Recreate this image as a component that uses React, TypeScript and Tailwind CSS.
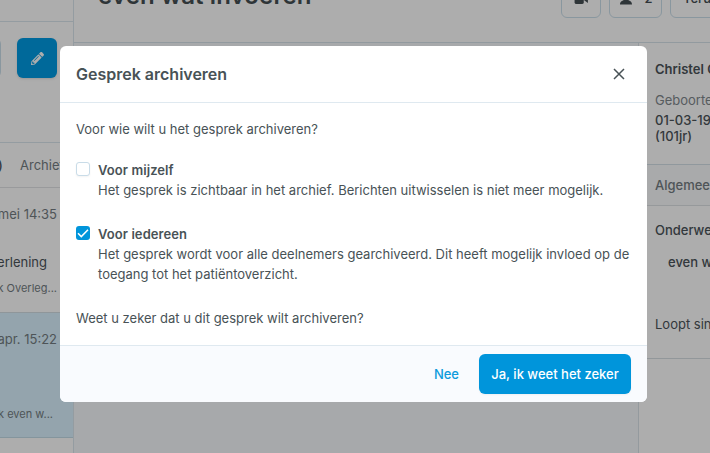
import { FaPencilAlt } from 'react-icons/fa';

type OptionProps = {
  title: string;
  description: string;
  checked?: boolean;
};

const Option = ({ title, description, checked = false }: OptionProps) => (
  <label className="flex gap-2">
    {checked ? (
      <span className="flex size-[14px] shrink-0 items-center justify-center rounded-[3px] bg-[#0095db]">
        <svg viewBox="0 0 14 14" className="size-[14px]" fill="none" stroke="white" strokeWidth="1.5">
          <path d="M2 7.2 5.3 10.6 12 3.7" />
        </svg>
      </span>
    ) : (
      <span className="size-[14px] shrink-0 rounded-[3px] border border-[#c9dce8] bg-white shadow-xs" />
    )}
    <span className="-mt-0.5 block">
      <span className="block font-semibold tracking-[0.08px]">{title}</span>
      <span className="block">{description}</span>
    </span>
  </label>
);

const Sidebar = () => (
  <aside className="flex h-full w-[74px] shrink-0 flex-col overflow-hidden border-r border-[#dbe6ee] bg-white text-[#747d82]">
    <div className="h-[22px] shrink-0 border-b border-[#dbe6ee]" />
    <div className="flex h-[121px] shrink-0 items-start justify-end gap-4 border-b border-[#dbe6ee] pt-4 pr-4">
      <div className="h-10 w-20 shrink-0 rounded-md border border-[#cbdfeb]" />
      <div className="flex size-10 shrink-0 items-center justify-center rounded-md bg-[#009be3] text-white shadow-sm">
        <FaPencilAlt className="size-[13px]" />
      </div>
    </div>
    <div className="flex h-[45px] shrink-0 items-center border-b border-[#e2e4e6]">
      <span className="-ml-0.5 w-[22px] shrink-0 font-medium text-[#4b5359]">)</span>
      <span>Archief</span>
    </div>
    <div className="h-[125px] shrink-0 border-b border-[#d3dde3] pt-4 pr-4 whitespace-nowrap">
      <div className="flex justify-end">mei 14:35</div>
      <div className="mt-7 flex justify-end pr-[10px] text-[#4b5359]">erlening</div>
      <div className="mt-1.5 flex justify-end text-[11px]">k Overleg...</div>
    </div>
    <div className="h-[125px] shrink-0 border-b border-[#c3dce7] bg-[#daf2ff] pt-4 pr-4 whitespace-nowrap">
      <div className="flex justify-end">apr. 15:22</div>
      <div className="mt-[55px] flex justify-end pr-1 text-[11px]">k even w...</div>
    </div>
  </aside>
);

const Toolbar = () => (
  <header className="flex h-[43px] shrink-0 items-start overflow-hidden border-b border-[#d8e3ea] bg-white text-[#454e53]">
    <h1 className="-mt-5 w-[487px] shrink-0 pl-6 text-2xl font-semibold tracking-[0.12px]">even wat invoeren</h1>
    <div className="-mt-[22px] flex shrink-0 gap-2">
      <div className="flex h-10 w-10 items-center justify-center rounded-md border border-[#cbdfeb]">
        <svg viewBox="0 0 16 12" className="h-[11px] w-4" fill="currentColor">
          <rect x="1" y="0" width="10" height="12" rx="2" />
          <path d="M11.5 5 15.5 2v9l-4-3z" />
        </svg>
      </div>
      <div className="flex h-10 w-[53px] items-center justify-center gap-2 rounded-md border border-[#cbdfeb] font-medium">
        <svg viewBox="0 0 18 14" className="h-[14px] w-[18px]" fill="currentColor">
          <circle cx="8" cy="5" r="3.5" />
          <path d="M2 13.5c0-3 2-3.5 4-4.5h4c2 1 4 1.5 4 4.5z" />
        </svg>
        2
      </div>
      <div className="flex h-10 w-20 items-center rounded-md border border-[#cbdfeb] pl-3 font-medium">Terug</div>
    </div>
  </header>
);

const PatientPanel = () => (
  <aside className="w-[72px] shrink-0 overflow-hidden border-l border-[#dbe3e9] bg-white whitespace-nowrap text-[#4b5359]">
    <div className="h-[122px] border-b border-[#d5e0e7] pt-4 pl-4">
      <div className="font-semibold">Christel G.</div>
      <div className="mt-[11px] text-[#7f888d]">Geboortedatum</div>
      <div className="mt-0.5 font-medium leading-4">01-03-1920</div>
      <div className="font-medium leading-4">(101jr)</div>
    </div>
    <div className="flex h-[41px] items-center border-b border-[#dde2e5] bg-[#fafbfc] pl-4 font-medium text-[#747d82]">Algemeen</div>
    <div className="h-[153px] border-b border-[#d8dfe4] pt-3.5 pl-4">
      <div className="font-medium">Onderwerp</div>
      <div className="mt-3 pl-[13px] font-medium">even wat invoeren</div>
      <div className="mt-[42px]">Loopt sinds</div>
    </div>
  </aside>
);

const ArchiveDialog = () => (
  <div role="dialog" aria-label="Gesprek archiveren" className="flex h-[356px] w-[587px] flex-col overflow-hidden rounded-md bg-white text-[#485256]">
    <div className="flex h-[57px] shrink-0 items-center justify-between border-b border-[#dfe9f0] px-4">
      <h2 className="text-base font-semibold">Gesprek archiveren</h2>
      <button className="flex size-6 items-center justify-center">
        <svg viewBox="0 0 12 12" className="size-3" fill="none" stroke="currentColor" strokeWidth="1.5">
          <path d="m1 1 10 10M11 1 1 11" />
        </svg>
      </button>
    </div>
    <div className="flex-1 px-4 pt-4">
      <p>Voor wie wilt u het gesprek archiveren?</p>
      <div className="mt-[23px] flex flex-col gap-[26px]">
        <Option title="Voor mijzelf" description="Het gesprek is zichtbaar in het archief. Berichten uitwisselen is niet meer mogelijk." />
        <Option
          title="Voor iedereen"
          description="Het gesprek wordt voor alle deelnemers gearchiveerd. Dit heeft mogelijk invloed op de toegang tot het patiëntoverzicht."
          checked
        />
      </div>
      <p className="mt-6">Weet u zeker dat u dit gesprek wilt archiveren?</p>
    </div>
    <div className="flex h-[57px] shrink-0 items-center justify-end gap-5 border-t border-[#dfe9f0] bg-[#f9fbfe] px-4 font-medium">
      <button className="text-[#0d9bdc]">Nee</button>
      <button className="h-10 w-[152px] rounded-md bg-[#0095db] text-white shadow-xs">Ja, ik weet het zeker</button>
    </div>
  </div>
);

const App = () => {
  return (
    <div className="relative h-[453px] w-[710px] overflow-hidden font-['Inter',sans-serif] text-[13px] leading-5">
      <div className="flex h-full">
        <Sidebar />
        <div className="flex min-w-0 flex-1 flex-col">
          <Toolbar />
          <div className="flex min-h-0 flex-1">
            <main className="flex-1 bg-[#f7fafc]" />
            <PatientPanel />
          </div>
        </div>
      </div>
      <div className="absolute inset-0 flex items-start bg-black/32 pt-[46px] pl-[60px]">
        <ArchiveDialog />
      </div>
    </div>
  );
};

export default App;
